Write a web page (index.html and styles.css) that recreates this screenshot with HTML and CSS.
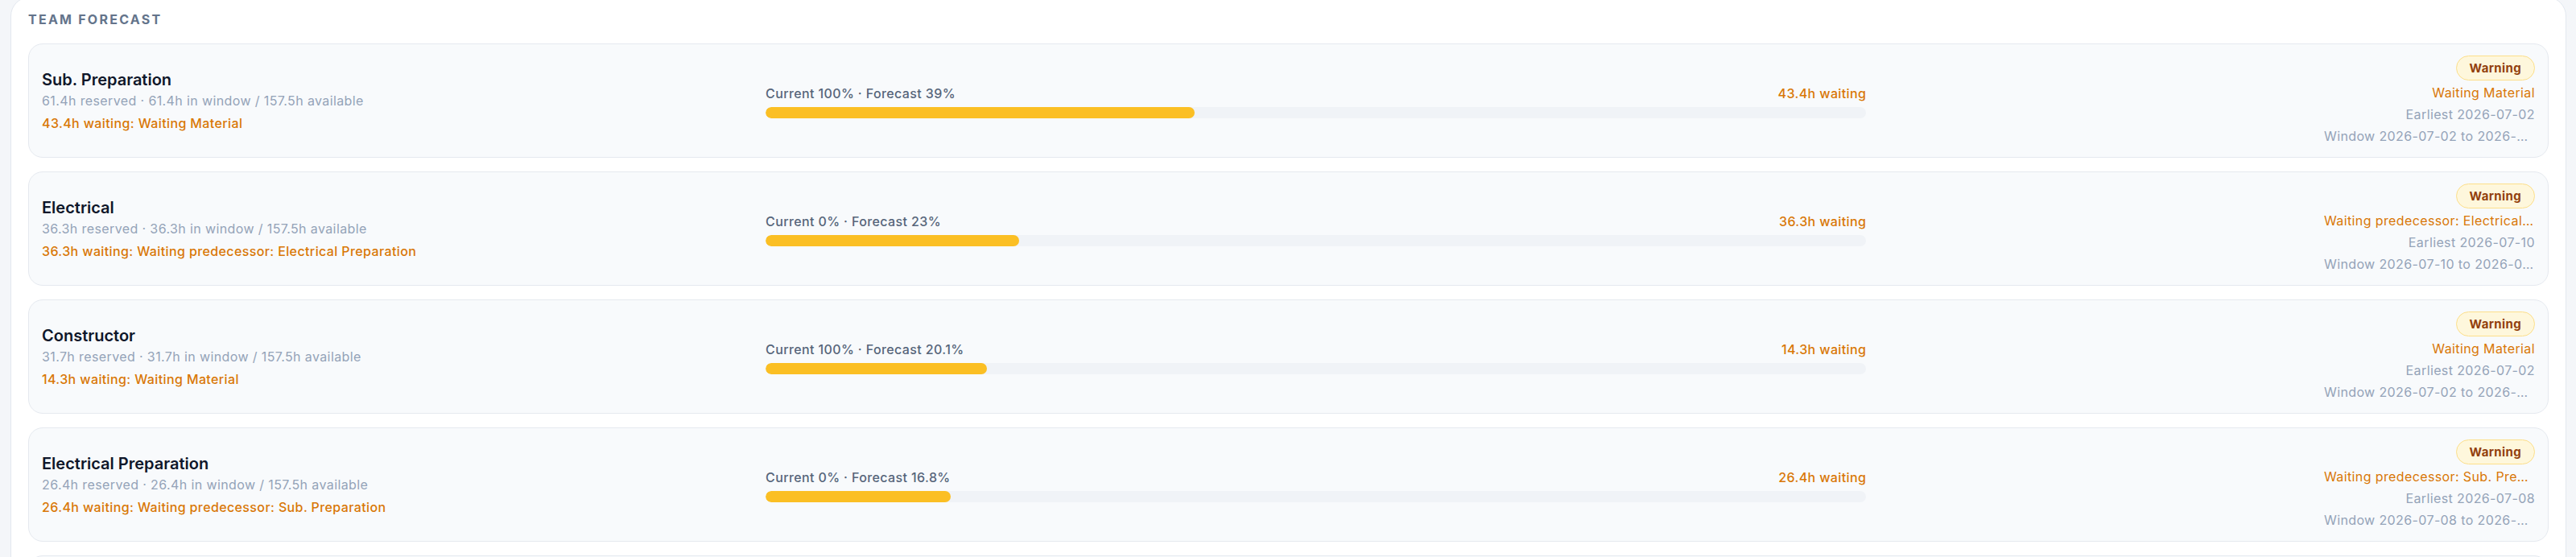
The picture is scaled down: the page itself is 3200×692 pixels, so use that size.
FILE: index.html
```html
<!DOCTYPE html>
<html lang="en">
<head>
  <meta charset="UTF-8" />
  <meta name="viewport" content="width=device-width, initial-scale=1.0" />
  <title>Team Forecast</title>
  <link rel="stylesheet" href="styles.css">
</head>
<body>
  <section class="panel">
    <h2 class="panel-title">Team forecast</h2>
    <div class="rows">
      <div class="row">
        <div class="team">
          <div class="team-name">Sub. Preparation</div>
          <div class="team-hours">61.4h reserved · 61.4h in window / 157.5h available</div>
          <div class="team-wait">43.4h waiting: Waiting Material</div>
        </div>
        <div class="load">
          <div class="load-head">
            <span class="load-label">Current 100% · Forecast 39%</span>
            <span class="load-wait">43.4h waiting</span>
          </div>
          <div class="bar"><div class="bar-fill" style="width: 39%"></div></div>
        </div>
        <div class="status">
          <span class="badge">Warning</span>
          <div class="status-line reason">Waiting Material</div>
          <div class="status-line">Earliest 2026-07-02</div>
          <div class="status-line">Window 2026-07-02 to 2026-07-17</div>
        </div>
      </div>

      <div class="row">
        <div class="team">
          <div class="team-name">Electrical</div>
          <div class="team-hours">36.3h reserved · 36.3h in window / 157.5h available</div>
          <div class="team-wait">36.3h waiting: Waiting predecessor: Electrical Preparation</div>
        </div>
        <div class="load">
          <div class="load-head">
            <span class="load-label">Current 0% · Forecast 23%</span>
            <span class="load-wait">36.3h waiting</span>
          </div>
          <div class="bar"><div class="bar-fill" style="width: 23%"></div></div>
        </div>
        <div class="status">
          <span class="badge">Warning</span>
          <div class="status-line reason">Waiting predecessor: Electrical Preparation</div>
          <div class="status-line">Earliest 2026-07-10</div>
          <div class="status-line">Window 2026-07-10 to 2026-07-17</div>
        </div>
      </div>

      <div class="row">
        <div class="team">
          <div class="team-name">Constructor</div>
          <div class="team-hours">31.7h reserved · 31.7h in window / 157.5h available</div>
          <div class="team-wait">14.3h waiting: Waiting Material</div>
        </div>
        <div class="load">
          <div class="load-head">
            <span class="load-label">Current 100% · Forecast 20.1%</span>
            <span class="load-wait">14.3h waiting</span>
          </div>
          <div class="bar"><div class="bar-fill" style="width: 20.1%"></div></div>
        </div>
        <div class="status">
          <span class="badge">Warning</span>
          <div class="status-line reason">Waiting Material</div>
          <div class="status-line">Earliest 2026-07-02</div>
          <div class="status-line">Window 2026-07-02 to 2026-07-17</div>
        </div>
      </div>

      <div class="row">
        <div class="team">
          <div class="team-name">Electrical Preparation</div>
          <div class="team-hours">26.4h reserved · 26.4h in window / 157.5h available</div>
          <div class="team-wait">26.4h waiting: Waiting predecessor: Sub. Preparation</div>
        </div>
        <div class="load">
          <div class="load-head">
            <span class="load-label">Current 0% · Forecast 16.8%</span>
            <span class="load-wait">26.4h waiting</span>
          </div>
          <div class="bar"><div class="bar-fill" style="width: 16.8%"></div></div>
        </div>
        <div class="status">
          <span class="badge">Warning</span>
          <div class="status-line reason">Waiting predecessor: Sub. Preparation</div>
          <div class="status-line">Earliest 2026-07-08</div>
          <div class="status-line">Window 2026-07-08 to 2026-07-17</div>
        </div>
      </div>

      <div class="row">
        <div class="team">
          <div class="team-name">Mechanical</div>
          <div class="team-hours">18.2h reserved · 18.2h in window / 157.5h available</div>
          <div class="team-wait">8.1h waiting: Waiting Material</div>
        </div>
        <div class="load">
          <div class="load-head">
            <span class="load-label">Current 0% · Forecast 11.6%</span>
            <span class="load-wait">8.1h waiting</span>
          </div>
          <div class="bar"><div class="bar-fill" style="width: 11.6%"></div></div>
        </div>
        <div class="status">
          <span class="badge">Warning</span>
          <div class="status-line reason">Waiting Material</div>
          <div class="status-line">Earliest 2026-07-06</div>
          <div class="status-line">Window 2026-07-06 to 2026-07-17</div>
        </div>
      </div>
    </div>
  </section>
</body>
</html>
```

FILE: styles.css
```css
:root {
  --page-bg: #f4f6f9;
  --panel-border: #e3e8ef;
  --card-bg: #f8fafc;
  --card-border: #e5e9ef;
  --ink: #0f172a;
  --muted: #94a3b8;
  --label: #56657a;
  --amber: #d97706;
  --amber-fill: #fbbf24;
  --track: #f0f3f7;
  --track-text: 0.024em;
  --font: 'Inter', 'Noto Sans', 'Liberation Sans', sans-serif;
}
* { box-sizing: border-box; margin: 0; padding: 0; }
body {
  background: var(--page-bg);
  font-family: var(--font);
  color: var(--ink);
  overflow: hidden;
}
.panel {
  margin: -4px 12px 0 13px;
  padding: 15px 21px;
  background: #fff;
  border: 1px solid var(--panel-border);
  border-radius: 24px;
}
.panel-title {
  font-size: 16px;
  line-height: 24px;
  font-weight: 700;
  letter-spacing: 0.14em;
  text-transform: uppercase;
  color: #64748b;
  margin-bottom: 18px;
}
.rows {
  display: flex;
  flex-direction: column;
  gap: 17px;
}
.row {
  display: grid;
  grid-template-columns: 1.28fr 2fr 1.18fr;
  gap: 24px;
  align-items: center;
  padding: 14px 16px;
  background: var(--card-bg);
  border: 1px solid var(--card-border);
  border-radius: 18px;
}
.team { min-width: 0; }
.team-name {
  font-size: 20px;
  line-height: 28px;
  font-weight: 600;
  color: var(--ink);
}
.team-hours {
  font-size: 16px;
  line-height: 24px;
  letter-spacing: var(--track-text);
  color: var(--muted);
}
.team-wait {
  margin-top: 4px;
  font-size: 16px;
  line-height: 24px;
  letter-spacing: var(--track-text);
  font-weight: 500;
  color: var(--amber);
}
.load {
  display: flex;
  flex-direction: column;
  gap: 5px;
}
.load-head {
  display: flex;
  justify-content: space-between;
  font-size: 16px;
  line-height: 24px;
  letter-spacing: var(--track-text);
  font-weight: 500;
}
.load-label { color: var(--label); }
.load-wait { color: var(--amber); }
.bar {
  height: 14px;
  border-radius: 999px;
  background: var(--track);
  overflow: hidden;
}
.bar-fill {
  height: 100%;
  border-radius: 999px;
  background: var(--amber-fill);
}
.status {
  display: flex;
  flex-direction: column;
  align-items: flex-end;
  gap: 3px;
  min-width: 0;
}
.badge {
  font-size: 15px;
  line-height: 19px;
  font-weight: 700;
  letter-spacing: var(--track-text);
  color: #92400e;
  background: #fef7dc;
  border: 1px solid #fcdf8a;
  border-radius: 999px;
  padding: 5px 16px;
}
.status-line {
  max-width: 262px;
  font-size: 16px;
  line-height: 24px;
  letter-spacing: var(--track-text);
  color: var(--muted);
  white-space: nowrap;
  overflow: hidden;
  text-overflow: ellipsis;
}
.status-line.reason { color: var(--amber); }
```
